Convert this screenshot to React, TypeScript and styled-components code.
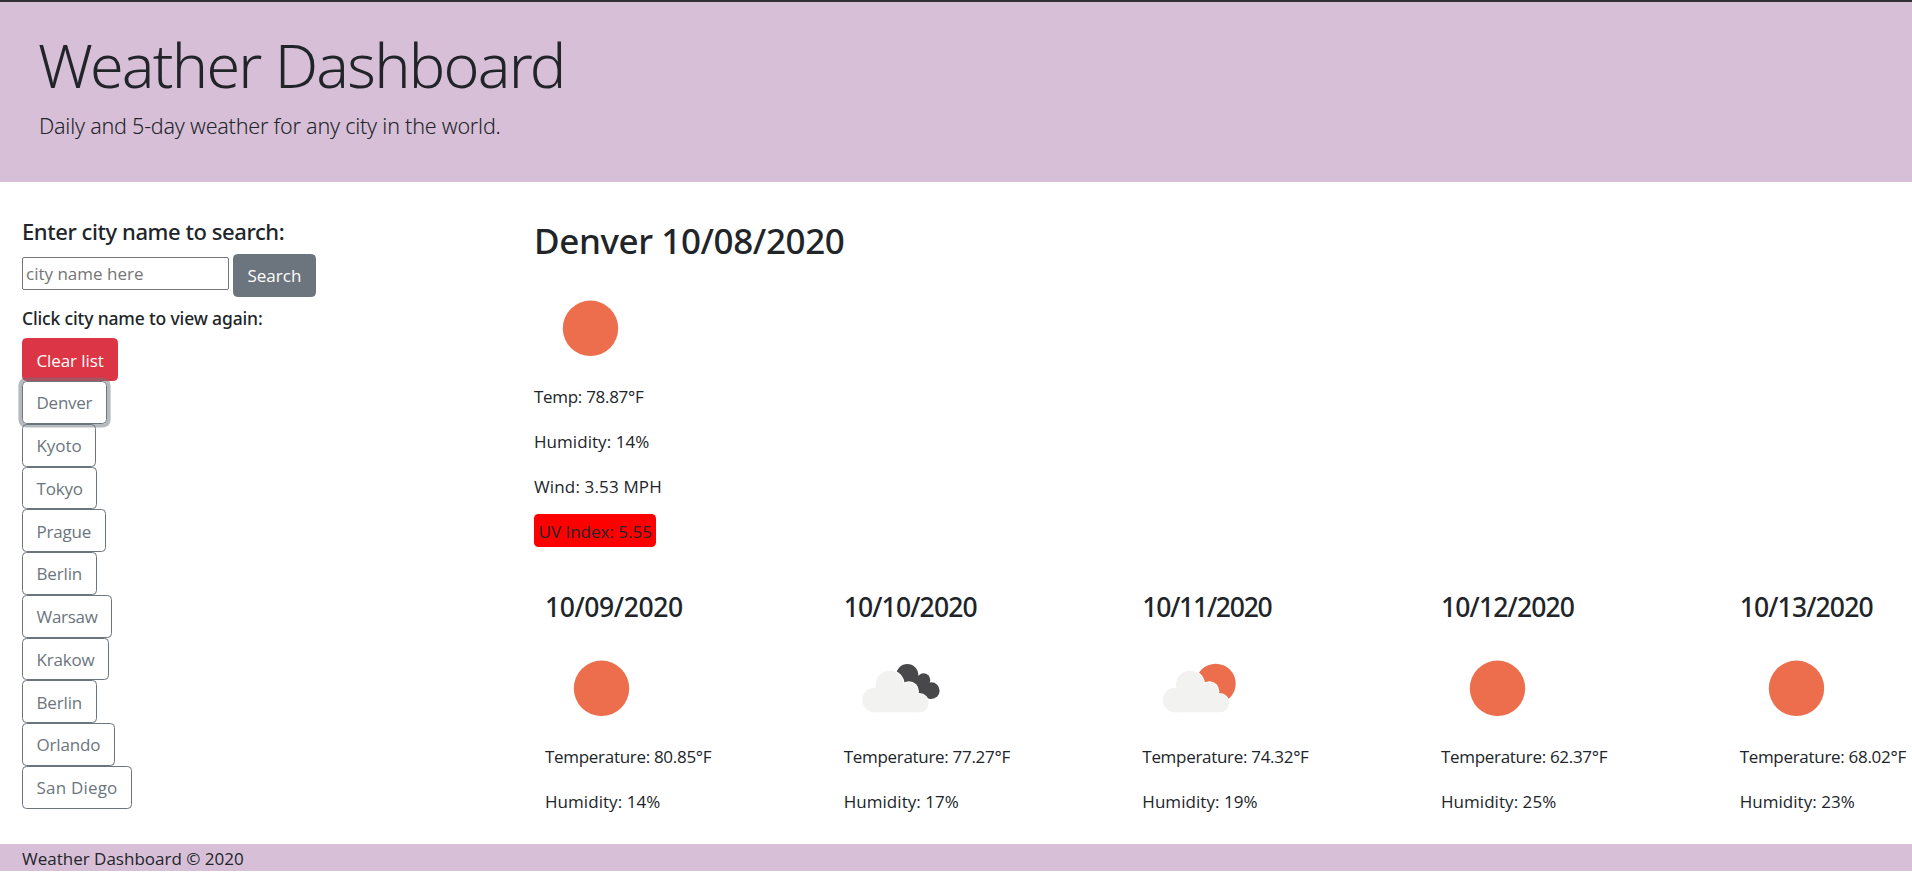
import React from "react";
import styled, { createGlobalStyle, css } from "styled-components";

const GlobalStyle = createGlobalStyle`
  *, *::before, *::after { box-sizing: border-box; }
  body {
    margin: 0;
    background: #fff;
    color: #212529;
    font-family: "Segoe UI", "Open Sans", "Noto Sans", sans-serif;
    font-size: 17px;
    line-height: 27px;
  }
`;

const headingFont = css`
  margin: 0;
  font-family: "Segoe UI", "Noto Sans", sans-serif;
  font-weight: 500;
  white-space: nowrap;
`;

const Page = styled.div`
  border-top: 2px solid #323234;
`;

const Header = styled.header`
  height: 180px;
  padding: 25px 38px 0;
  background: #d8bfd8;
`;

const Title = styled.h1`
  ${headingFont}
  font-size: 61px;
  font-weight: 300;
  line-height: 76px;
  letter-spacing: -1.75px;
`;

const Lead = styled.p`
  margin: 6px 0 0;
  padding-left: 1px;
  font-family: "Segoe UI", "Noto Sans", sans-serif;
  font-size: 21.5px;
  font-weight: 300;
  line-height: 34px;
  letter-spacing: -0.22px;
`;

const Main = styled.main`
  display: flex;
  height: 662px;
  padding: 36px 0 0 22px;
`;

const Sidebar = styled.aside`
  flex: 0 0 512px;
`;

const SearchHeading = styled.h2`
  ${headingFont}
  font-size: 22px;
  line-height: 27px;
  letter-spacing: -0.42px;
`;

const HistoryHeading = styled.h3`
  ${headingFont}
  margin: 11.5px 0 8.5px;
  font-size: 17.5px;
  line-height: 21.5px;
  letter-spacing: -0.15px;
`;

const SearchRow = styled.form`
  display: flex;
  align-items: flex-start;
  gap: 4px;
  margin-top: 9px;
`;

const CityInput = styled.input`
  width: 207px;
  height: 33px;
  margin-top: 3px;
  padding: 0 3px;
  border: 1px solid #767676;
  border-radius: 2px;
  background: #fff;
  font: inherit;
  &::placeholder { color: #757575; opacity: 1; }
`;

type Tone = "solid" | "danger" | "outline";

const tones = {
  solid: css`border-color: #6c757d; background: #6c757d; color: #fff;`,
  danger: css`border-color: #dc3545; background: #dc3545; color: #fff;`,
  outline: css`border-color: #6c757d; background: transparent; color: #6c757d;`,
};

const Button = styled.button<{ $tone: Tone; $active?: boolean; $tracking?: number }>`
  height: 42.75px;
  padding: 1px 13.5px 0;
  border: 1px solid;
  border-radius: 4.5px;
  font: inherit;
  letter-spacing: ${({ $tracking = 0 }) => $tracking}px;
  white-space: nowrap;
  ${({ $tone }) => tones[$tone]}
  ${({ $active }) => $active && css`box-shadow: 0 0 0 3.6px rgba(108, 117, 125, 0.5);`}
`;

const History = styled.div`
  display: flex;
  flex-direction: column;
  align-items: flex-start;
`;

const Weather = styled.section`
  flex: 1 1 0;
  min-width: 0;
`;

const CityHeading = styled.h2`
  ${headingFont}
  padding: 1px 0;
  font-size: 35px;
  line-height: 43px;
  letter-spacing: -0.4px;
`;

const DayHeading = styled.h4<{ $tracking: number }>`
  ${headingFont}
  padding-top: 1px;
  font-size: 26.5px;
  line-height: 32px;
  letter-spacing: ${({ $tracking }) => $tracking}px;
`;

const IconBox = styled.div`
  height: 111.5px;
  margin-top: 8.5px;
  svg { display: block; width: 112.5px; height: 112.5px; }
`;

const Reading = styled.p<{ $tracking?: number }>`
  margin: 0 0 18px;
  letter-spacing: ${({ $tracking = 0 }) => $tracking}px;
  white-space: nowrap;
`;

const UvBadge = styled.div`
  display: flex;
  align-items: center;
  width: 122px;
  height: 33px;
  margin-top: -4px;
  padding: 2px 4.5px 0;
  border-radius: 4.5px;
  background: red;
  white-space: nowrap;
`;

const Forecast = styled.div`
  display: flex;
  margin: 43px 0 0 11px;
`;

const Day = styled.article`
  flex: 0 0 298.67px;
  &:last-child {
    flex: 1 1 0;
    min-width: 0;
  }
`;

const Footer = styled.footer`
  height: 27px;
  padding: 1px 22px 0;
  background: #d8bfd8;
`;

type Sky = "clear" | "clouds" | "partly";

const SUN = "#ec6e4c";
const CLOUD = "#f2f2f1";

function Cloud() {
  return (
    <>
      <g fill="#fff">
        <circle cx="88" cy="87" r="45" />
        <circle cx="146" cy="107" r="30" />
        <circle cx="177" cy="142" r="30" />
      </g>
      <g fill={CLOUD}>
        <circle cx="43" cy="133" r="37" />
        <circle cx="88" cy="87" r="42" />
        <circle cx="146" cy="107" r="27" />
        <circle cx="177" cy="142" r="28" />
        <path d="M43 170V110L100 80L150 100L177 130V170Z" />
      </g>
    </>
  );
}

function SkyIcon({ sky }: { sky: Sky }) {
  return (
    <svg viewBox="0 0 112.5 112.5" aria-hidden="true">
      {sky === "clear" && <circle cx="56.5" cy="56.3" r="27.7" fill={SUN} />}
      {sky === "clouds" && (
        <g transform="translate(16.3 23.7) scale(.3333)">
          <g fill="#48484a">
            <circle cx="141" cy="58" r="33" />
            <circle cx="190" cy="73" r="20" />
            <circle cx="213" cy="105" r="25" />
            <path d="M141 58L173 60L205 85L213 130L170 120Z" />
          </g>
          <Cloud />
        </g>
      )}
      {sky === "partly" && (
        <g transform="translate(12.7 23.7) scale(.3333)">
          <circle cx="183" cy="84" r="60" fill={SUN} />
          <g transform="translate(18 0)">
            <Cloud />
          </g>
        </g>
      )}
    </svg>
  );
}

const cities = [
  { name: "Denver", tracking: -0.25 },
  { name: "Kyoto", tracking: -0.05 },
  { name: "Tokyo", tracking: -0.2 },
  { name: "Prague", tracking: -0.2 },
  { name: "Berlin", tracking: -0.15 },
  { name: "Warsaw", tracking: -0.3 },
  { name: "Krakow", tracking: -0.2 },
  { name: "Berlin", tracking: -0.15 },
  { name: "Orlando", tracking: -0.15 },
  { name: "San Diego", tracking: 0.2 },
];

const days: { date: string; tracking: number; sky: Sky; temp: string; humidity: number }[] = [
  { date: "10/09/2020", tracking: -0.4, sky: "clear", temp: "80.85", humidity: 14 },
  { date: "10/10/2020", tracking: -0.85, sky: "clouds", temp: "77.27", humidity: 17 },
  { date: "10/11/2020", tracking: -1.25, sky: "partly", temp: "74.32", humidity: 19 },
  { date: "10/12/2020", tracking: -0.85, sky: "clear", temp: "62.37", humidity: 25 },
  { date: "10/13/2020", tracking: -0.85, sky: "clear", temp: "68.02", humidity: 23 },
];

export default function App() {
  return (
    <Page>
      <GlobalStyle />
      <Header>
        <Title>Weather Dashboard</Title>
        <Lead>Daily and 5-day weather for any city in the world.</Lead>
      </Header>
      <Main>
        <Sidebar>
          <SearchHeading>Enter city name to search:</SearchHeading>
          <SearchRow onSubmit={(e) => e.preventDefault()}>
            <CityInput placeholder="city name here" />
            <Button $tone="solid">Search</Button>
          </SearchRow>
          <HistoryHeading>Click city name to view again:</HistoryHeading>
          <History>
            <Button $tone="danger" $tracking={-0.1}>Clear list</Button>
            {cities.map((city, i) => (
              <Button key={i} $tone="outline" $active={i === 0} $tracking={city.tracking}>
                {city.name}
              </Button>
            ))}
          </History>
        </Sidebar>
        <Weather>
          <CityHeading>Denver 10/08/2020</CityHeading>
          <IconBox><SkyIcon sky="clear" /></IconBox>
          <Reading $tracking={-0.3}>Temp: 78.87°F</Reading>
          <Reading $tracking={0.05}>Humidity: 14%</Reading>
          <Reading $tracking={0.15}>Wind: 3.53 MPH</Reading>
          <UvBadge>UV Index: 5.55</UvBadge>
          <Forecast>
            {days.map((day) => (
              <Day key={day.date}>
                <DayHeading $tracking={day.tracking}>{day.date}</DayHeading>
                <IconBox><SkyIcon sky={day.sky} /></IconBox>
                <Reading $tracking={-0.3}>Temperature: {day.temp}°F</Reading>
                <Reading $tracking={0.05}>Humidity: {day.humidity}%</Reading>
              </Day>
            ))}
          </Forecast>
        </Weather>
      </Main>
      <Footer>Weather Dashboard © 2020</Footer>
    </Page>
  );
}
